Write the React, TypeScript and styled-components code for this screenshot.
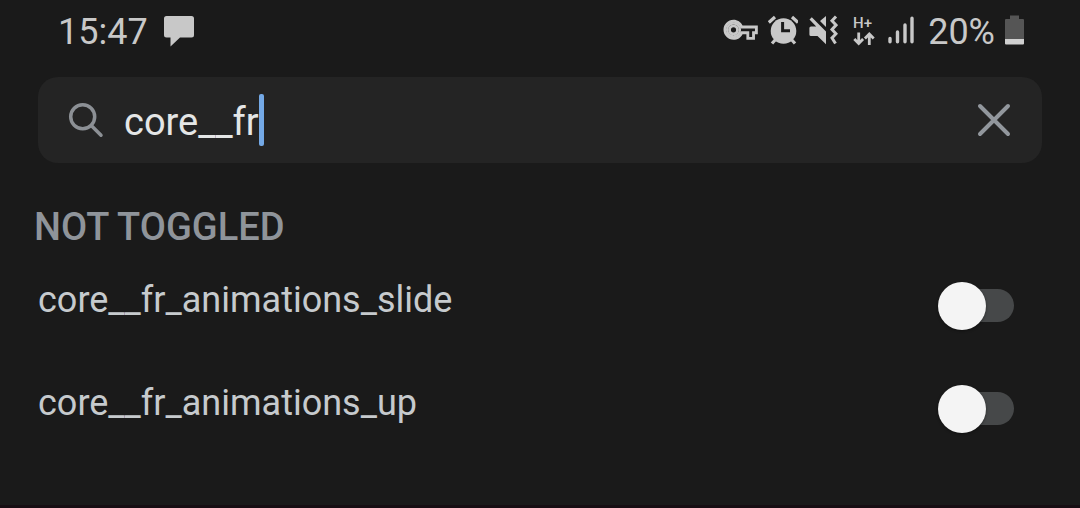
import React, { useState } from "react";
import styled, { createGlobalStyle } from "styled-components";

const GlobalStyle = createGlobalStyle`
  *, *::before, *::after { box-sizing: border-box; }
  html { background: #1a1a1a; }
  body {
    margin: 0;
    background: #1a1a1a;
    color: #c8c8c8;
    font-family: Roboto, "Liberation Sans", sans-serif;
  }
`;

const Screen = styled.div`
  min-height: 100vh;
  display: flex;
  flex-direction: column;
  border-bottom: 3px solid #170e13;
`;

const StatusBar = styled.header`
  display: flex;
  align-items: center;
  justify-content: space-between;
  height: 60px;
  padding: 4px 56px 0 58px;
  color: #c8c8c8;
  font-size: 36px;
  line-height: 44px;
`;

const StatusGroup = styled.div<{ $gap: number }>`
  display: flex;
  align-items: center;
  gap: ${(p) => p.$gap}px;
`;

const Glyph = styled.svg`
  display: block;
  flex: none;
`;

const SearchBox = styled.label`
  display: flex;
  align-items: center;
  height: 86px;
  margin: 17px 38px 0;
  padding: 0 26px 0 30px;
  border-radius: 20px;
  background: #242424;
`;

const Field = styled.div`
  position: relative;
  flex: 1;
  min-width: 0;
  margin-left: 20px;
  font-size: 38px;
  line-height: 52px;
`;

const Input = styled.input`
  display: block;
  width: 100%;
  height: 52px;
  padding: 4px 0 0;
  border: 0;
  outline: 0;
  background: transparent;
  color: #e4e6e6;
  font: inherit;
  line-height: 48px;
  caret-color: transparent;
`;

const CaretTrack = styled.span`
  position: absolute;
  inset: 0 auto 0 0;
  display: flex;
  pointer-events: none;
`;

const Mirror = styled.span`
  visibility: hidden;
  white-space: pre;
`;

const Caret = styled.span`
  width: 5px;
  border-radius: 2px;
  background: #74a9e6;
`;

const ClearButton = styled.button`
  display: flex;
  padding: 0;
  border: 0;
  background: transparent;
  color: #92979d;
  cursor: pointer;
`;

const Section = styled.section`
  padding: 40px 34px 0;
`;

const Heading = styled.h2`
  margin: 0 0 3px;
  color: #8f949a;
  font-size: 38px;
  font-weight: 500;
  line-height: 48px;
`;

const Row = styled.label`
  display: flex;
  align-items: center;
  justify-content: space-between;
  height: 103px;
  padding: 0 32px 0 4px;
  color: #c6cacd;
  font-size: 36px;
  line-height: 44px;
  cursor: pointer;
`;

const RowText = styled.span`
  padding-bottom: 12px;
`;

const Toggle = styled.input`
  appearance: none;
  display: grid;
  align-items: center;
  flex: none;
  width: 76px;
  height: 48px;
  margin: 0;
  cursor: pointer;

  &::before,
  &::after {
    content: "";
    grid-area: 1 / 1;
  }

  &::before {
    height: 33px;
    margin-left: 8px;
    border-radius: 17px;
    background: #464849;
  }

  &::after {
    width: 48px;
    height: 48px;
    border-radius: 50%;
    background: #f4f4f4;
    box-shadow: 0 1px 3px rgba(0, 0, 0, 0.4);
  }

  &:checked::after {
    justify-self: end;
  }
`;

const ToggleRow = ({ name }: { name: string }) => (
  <Row>
    <RowText>{name}</RowText>
    <Toggle type="checkbox" role="switch" />
  </Row>
);

const MessageIcon = () => (
  <Glyph width="30" height="36" viewBox="0 0 30 36" fill="currentColor" aria-hidden="true">
    <path d="M2.5 2h25A2.5 2.5 0 0 1 30 4.500V21a2.500 2.500 0 0 1-2.500 2.500H16L6.500 32.500V23.500h-4A2.500 2.500 0 0 1 0 21V4.500A2.500 2.500 0 0 1 2.500 2Z" />
  </Glyph>
);

const KeyIcon = () => (
  <Glyph width="35" height="36" viewBox="0 0 35 36" fill="currentColor" fillRule="evenodd" aria-label="VPN" role="img">
    <g transform="translate(0.5 -1.300) scale(1.430)">
      <path d="M22 19h-6v-4h-2.680c-1.140 2.420-3.600 4-6.320 4-3.860 0-7-3.140-7-7s3.140-7 7-7c2.720 0 5.170 1.580 6.320 4H24v6h-2v4zm-4-2h2v-4h2v-2H11.940l-.23-.67C11.010 8.340 9.110 7 7 7c-2.760 0-5 2.240-5 5s2.240 5 5 5c2.110 0 4.010-1.340 4.710-3.330l.23-.67H18v4z" />
      <path d="M7 8.200a3.800 3.800 0 1 0 0 7.600 3.800 3.800 0 0 0 0-7.600Zm0 2a1.800 1.800 0 1 1 0 3.600 1.800 1.800 0 0 1 0-3.600Z" />
      <circle cx="7" cy="12" r="4.500" fill="none" stroke="currentColor" strokeWidth="1.600" />
    </g>
  </Glyph>
);

const AlarmIcon = () => (
  <Glyph width="30" height="36" viewBox="0 0 30 36" aria-label="Alarm" role="img">
    <circle cx="15.500" cy="17" r="12.800" fill="currentColor" />
    <path d="M14.600 8v8.800H22" fill="none" stroke="#1a1a1a" strokeWidth="3" />
    <path d="M.8 8.500 7 3M24 3l6 5.500M4 29.500l4-4.500M27 29.500 23 25" fill="none" stroke="currentColor" strokeWidth="3.200" />
  </Glyph>
);

const MuteIcon = () => (
  <Glyph width="30" height="36" viewBox="0 0 30 36" fill="currentColor" aria-label="Vibrate" role="img">
    <path d="M1.500 5.500 3.800 3.200 18 17.400V30.200L9.500 22H3a1.600 1.600 0 0 1-1.600-1.600V14A1.600 1.600 0 0 1 3 12.400h5.200ZM12 7l6-5v11Z" />
    <path d="m28 2.500-4 4.300 4 4.300-4 4.300 4 4.300-4 4.300 3.500 5.500" fill="none" stroke="currentColor" strokeWidth="3" />
  </Glyph>
);

const DataIcon = () => (
  <Glyph width="30" height="36" viewBox="0 0 30 36" fill="none" stroke="currentColor" strokeWidth="2.800" aria-label="H+ data" role="img">
    <text x="5" y="13.500" fontSize="15" fontWeight="500" fill="currentColor" stroke="none">H+</text>
    <path d="M10.700 18.500v11M6.300 25l4.400 4.500L15.100 25M21.300 31V20M16.900 24.500l4.400-4.500 4.400 4.500" />
  </Glyph>
);

const SignalIcon = () => (
  <Glyph width="30" height="36" viewBox="0 0 30 36" fill="none" stroke="currentColor" strokeWidth="3.400" strokeLinecap="round" aria-label="Signal" role="img">
    <path d="M2 24.500v3.300M9.500 18v9.800M17 11v16.800M24 4.200v23.600" />
  </Glyph>
);

const BatteryIcon = () => (
  <Glyph width="19" height="36" viewBox="0 0 19 36" aria-hidden="true">
    <path d="M5 1.500h9V5h4a1 1 0 0 1 1 1v19H0V6a1 1 0 0 1 1-1h4Z" fill="#555555" />
    <path d="M0 25h19v4.500a1 1 0 0 1-1 1H1a1 1 0 0 1-1-1Z" fill="#d0d0d0" />
  </Glyph>
);

const SearchIcon = () => (
  <Glyph width="36" height="36" viewBox="0 0 36 36" fill="none" stroke="#8c9095" strokeWidth="3.500" strokeLinecap="round" aria-hidden="true">
    <circle cx="14.700" cy="14.700" r="12" />
    <path d="m23.500 23.700 9.500 9.500" />
  </Glyph>
);

export default function App() {
  const [query, setQuery] = useState("core__fr");
  return (
    <Screen>
      <GlobalStyle />
      <StatusBar>
        <StatusGroup $gap={16}>
          <time>15:47</time>
          <MessageIcon />
        </StatusGroup>
        <StatusGroup $gap={10}>
          <KeyIcon />
          <AlarmIcon />
          <MuteIcon />
          <DataIcon />
          <SignalIcon />
          <span>20%</span>
          <BatteryIcon />
        </StatusGroup>
      </StatusBar>
      <SearchBox>
        <SearchIcon />
        <Field>
          <Input aria-label="Search" value={query} onChange={(e) => setQuery(e.target.value)} />
          <CaretTrack aria-hidden="true">
            <Mirror>{query}</Mirror>
            <Caret />
          </CaretTrack>
        </Field>
        <ClearButton type="button" aria-label="Clear" onClick={() => setQuery("")}>
          <Glyph width="44" height="44" viewBox="0 0 44 44" fill="none" stroke="currentColor" strokeWidth="4" strokeLinecap="round">
            <path d="M8 8 36 36M36 8 8 36" />
          </Glyph>
        </ClearButton>
      </SearchBox>
      <Section>
        <Heading>NOT TOGGLED</Heading>
        <ToggleRow name="core__fr_animations_slide" />
        <ToggleRow name="core__fr_animations_up" />
      </Section>
    </Screen>
  );
}
